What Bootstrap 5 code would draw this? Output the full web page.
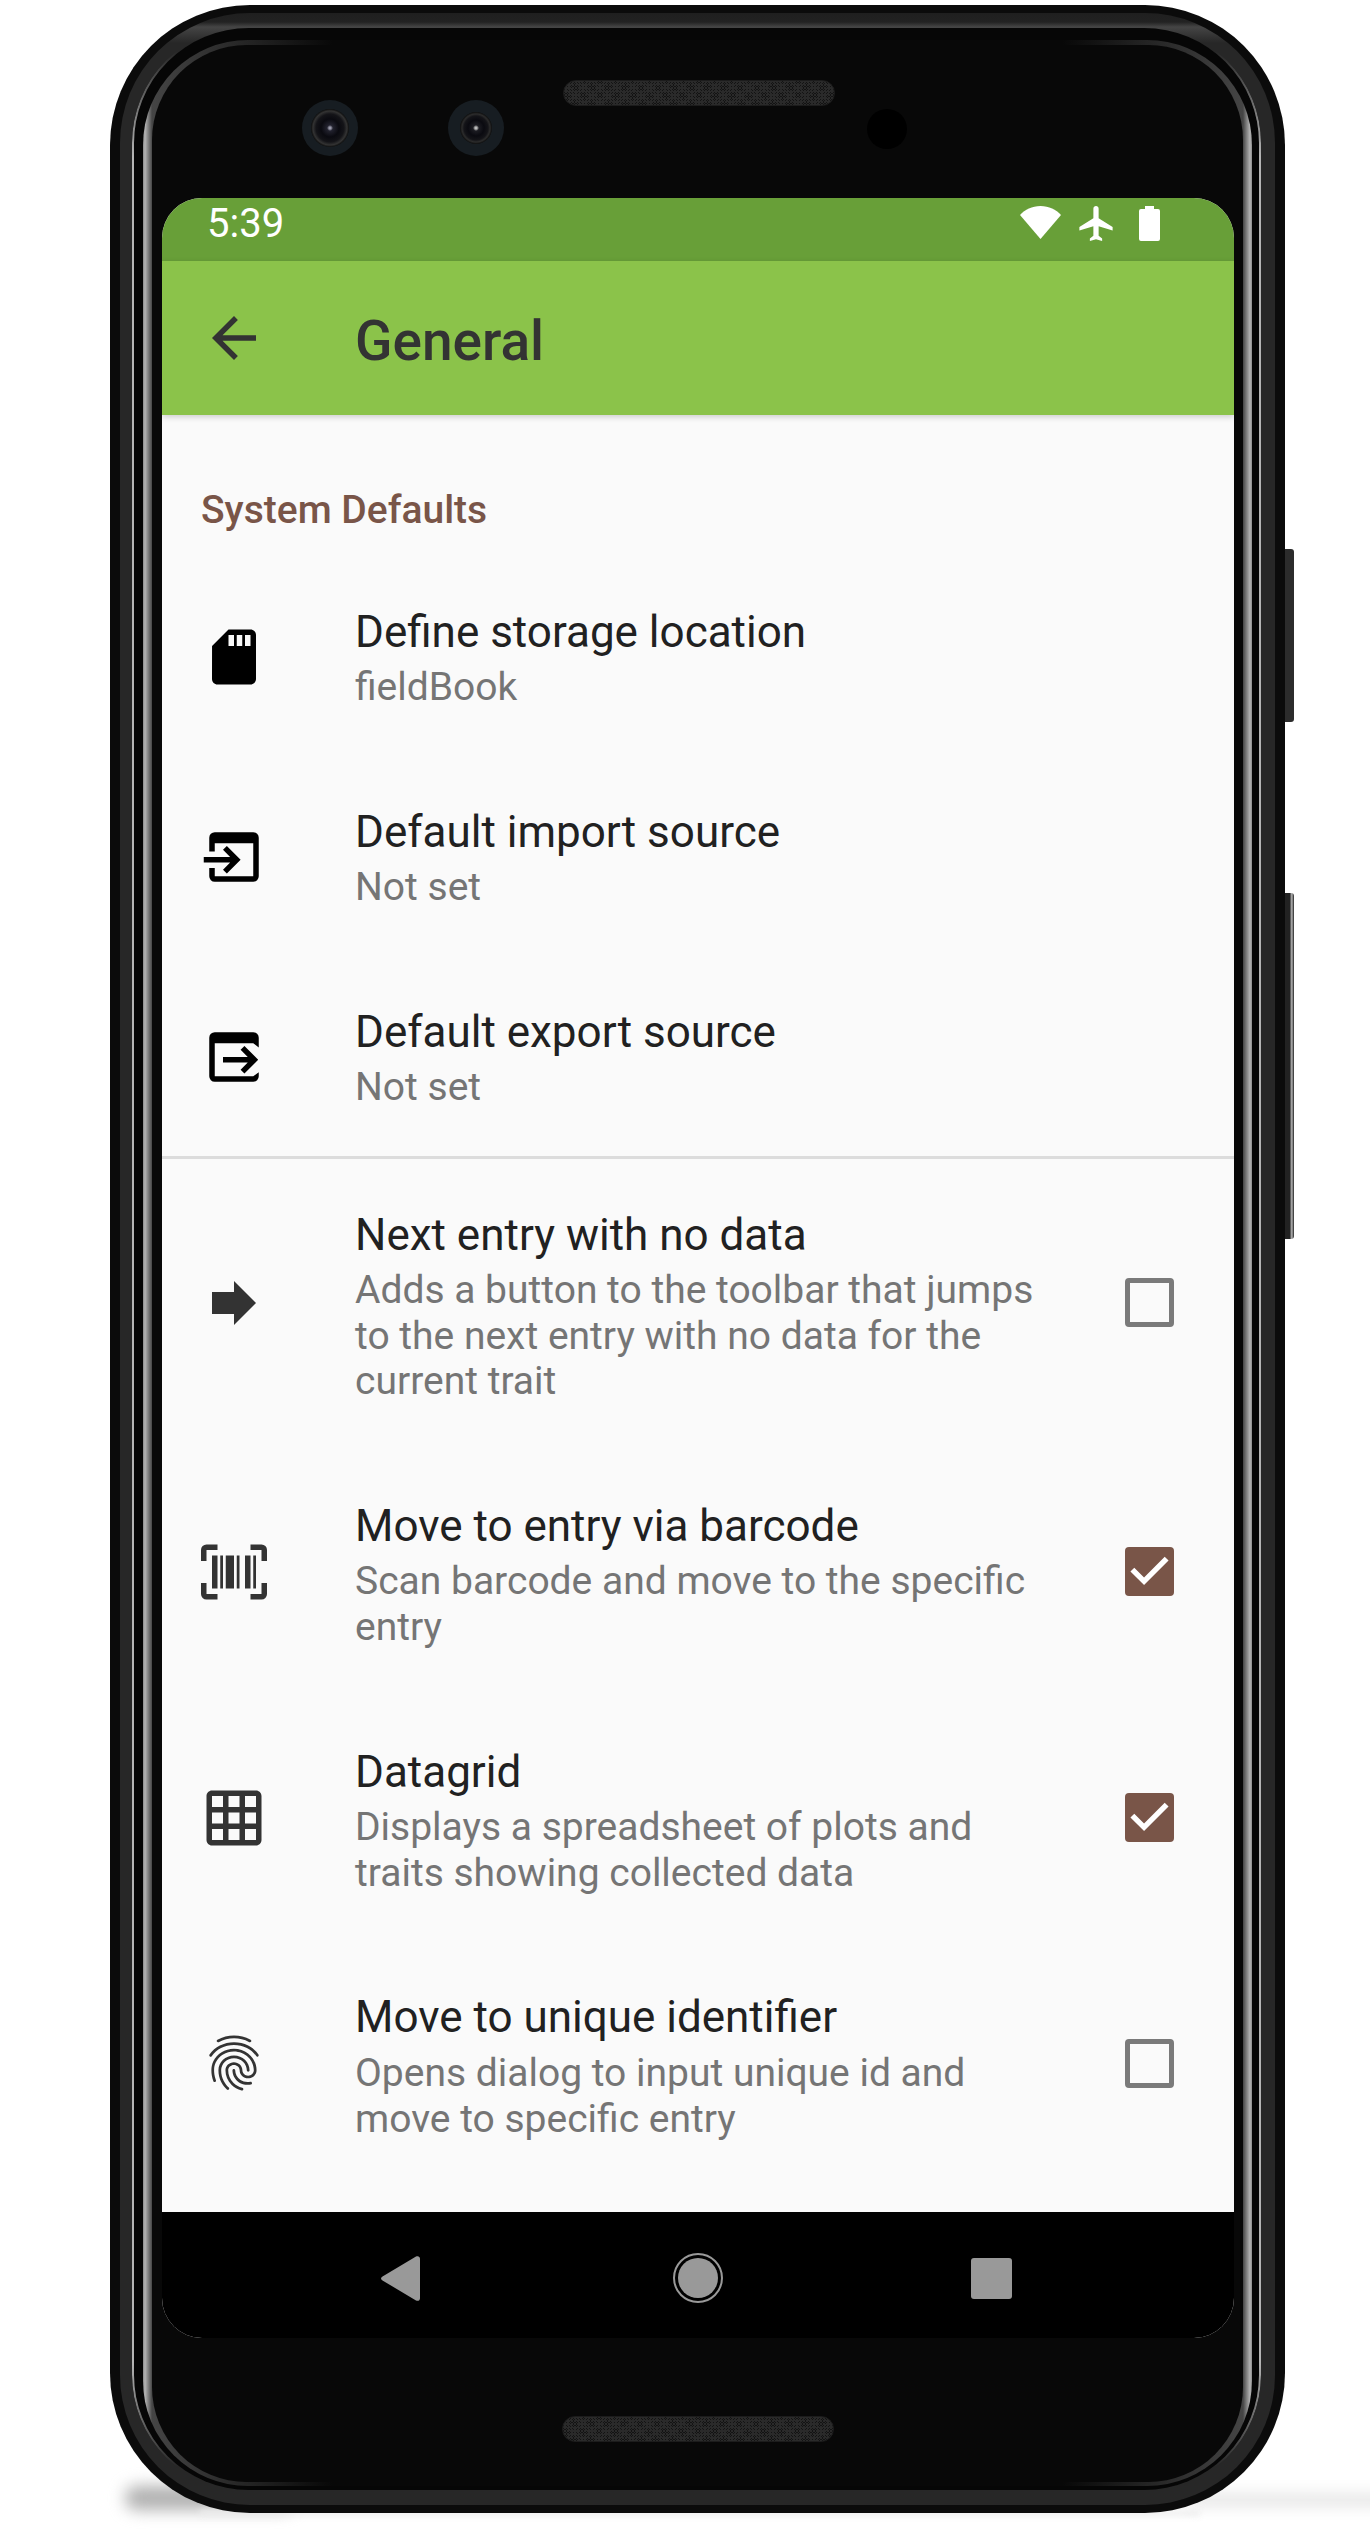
<!DOCTYPE html>
<html lang="en">
<head>
    <meta charset="UTF-8">
    <title>General</title>
    <link href="https://cdn.jsdelivr.net/npm/bootstrap@5.3.3/dist/css/bootstrap.min.css" rel="stylesheet">
    <style>
        html { height: 2534px; overflow: hidden; background: #fff; }
        body { height: 2534px; overflow: hidden; background: transparent; font-family: Roboto, "Liberation Sans", sans-serif; position: relative; }

        /* phone body, one nested layer per band of the frame */
        .phone { position: relative; width: 1175px; height: 2508px; margin: 5px 0 0 110px; }
        .shell-a, .shell-b, .shell-c, .shell-d, .bezel { height: 100%; }
        .shell-a { position: relative; background: #0b0b0b; border-radius: 140px; padding: 8px 10px; }
        .shell-b { background: linear-gradient(180deg, #1f1f1f 0, #222 9px, #454545 14px, #272727 30px); border-radius: 130px; padding: 15px 16px 15px 14px; }
        .shell-c { position: relative; background: #060606; border-radius: 115px; padding: 12px 7px 4px 9px; }
        .shell-c::before { content: ""; position: absolute; inset: -2px; border: 2px solid #b5b5b5; border-radius: 117px;
            -webkit-mask-image: linear-gradient(180deg, transparent 25px, #000 130px, #000 calc(100% - 130px), transparent calc(100% - 25px));
            mask-image: linear-gradient(180deg, transparent 25px, #000 130px, #000 calc(100% - 130px), transparent calc(100% - 25px)); }
        .shell-d { border-radius: 105px; padding: 5px 9px 4px 9px;
            background: linear-gradient(90deg, #8a8a8a 0, #b5b5b5 2px, #454545 9px, #333 60px, #080808 190px, #080808 calc(100% - 190px), #333 calc(100% - 60px), #454545 calc(100% - 9px), #b5b5b5 calc(100% - 2px), #8a8a8a 100%); }
        .bezel { background: #080808; border-radius: 95px; padding: 0 9px 0 10px; }
        .side-key { position: absolute; left: 1174px; width: 10px; border-radius: 0 3px 3px 0; }
        .key-power { top: 544px; height: 173px; background: #2c2c2c; }
        .key-volume { top: 888px; height: 346px; background: linear-gradient(90deg, #222 0, #222 6px, #999 7px, #aaa 8px, #222 10px); }
        .floor-left { position: absolute; left: 125px; top: 2486px; width: 170px; height: 24px; background: #b0b0b0; filter: blur(8px); border-radius: 30px; }
        .floor-mid { position: absolute; left: 200px; top: 2510px; width: 1000px; height: 6px; background: #eee; filter: blur(3px); }
        .floor-right { position: absolute; left: 1190px; top: 2493px; width: 200px; height: 14px; background: #e8e8e8; filter: blur(7px); }

        .top-bezel { height: 153px; padding-left: 140px; }
        .bottom-bezel { height: 144px; padding-top: 78px; }
        .lens-wrap { width: 56px; height: 56px; margin-top: 55px; border-radius: 50%; background: #171d22; }
        .lens-gap { margin-left: 90px; }
        .lens-one { width: 38px; height: 38px; border-radius: 50%; background: radial-gradient(circle, #99a 0 1px, #22222e 3px, #0a0a10 9px, #141418 14px, #333 17px, #0d0d0d 19px); }
        .lens-two { width: 32px; height: 32px; border-radius: 50%; background: radial-gradient(circle, #bbb 0 1px, #1c1c22 3px, #0a0a10 8px, #141418 12px, #2c2c2c 14px, #0d0d0d 16px); }
        .grille { width: 272px; height: 26px; border-radius: 13px; border: 1px solid #1c1c1c; background-color: #131313;
            background-image: repeating-linear-gradient(45deg, #2a2a2a 0 1px, transparent 1px 2px), repeating-linear-gradient(-45deg, #2a2a2a 0 1px, transparent 1px 2px); }
        .grille-top { margin: 35px 0 0 59px; }
        .sensor { width: 40px; height: 40px; margin: 64px 0 0 32px; border-radius: 50%; background: #000; }

        .screen { height: 2140px; background: #fafafa; border-radius: 40px; overflow: hidden; }
        .status-row { height: 63px; background: #689f38; color: #fff; padding: 0 74px 0 45px; font-size: 40px; line-height: 1; }
        .status-time { margin-top: 6px; }
        .status-icons { gap: 18px; padding-top: 8px; }
        .battery-gap { margin-left: 8px; }
        .app-row { position: relative; height: 154px; background: #8bc34a; color: #333; box-shadow: 0 2px 6px rgba(0, 0, 0, .18); padding-left: 39px; }
        .app-title { font-size: 55px; font-weight: 500; margin: 7px 0 0 0; line-height: 1; }
        .pref-section { padding: 72px 0 23px 39px; font-size: 39px; line-height: 46px; font-weight: 500; color: #795548; }
        .pref-row { padding: 47.5px 60px 45.3px 39px; }
        .pref-icon { width: 66px; height: 66px; flex: none; margin-right: 88px; }
        .pref-title { font-size: 44px; line-height: 56px; color: #212121; }
        .pref-sub { font-size: 39px; line-height: 45.7px; margin-top: 5.5px; color: #757575; }
        .pref-check.form-check-input { width: 49px; height: 49px; flex: none; margin: 0 0 0 75px; border: 5px solid #7a7a7a; border-radius: 4px; background-color: transparent; }
        .pref-check.form-check-input:checked { border: 0; background-color: #795548; background-size: 100%;
            background-image: url("data:image/svg+xml,%3csvg xmlns='http://www.w3.org/2000/svg' viewBox='3 3 18 18'%3e%3cpath fill='%23fff' d='M10 17l-5-5 1.41-1.41L10 14.17l7.59-7.59L19 8l-9 9z'/%3e%3c/svg%3e"); }
        /* icon and checkbox sit a little above centre in the lower rows */
        .pref-tall .pref-icon { margin-bottom: 6px; }
        .pref-tall .pref-check.form-check-input { margin-bottom: 6px; }
        .pref-mid .pref-icon { margin-bottom: 5px; }
        .pref-mid .pref-check.form-check-input { margin-bottom: 5px; }
        .pref-rule { height: 3px; margin: 0; background: #dcdcdc; border: 0; opacity: 1; }
        .nav-row { height: 126px; background: #000; padding: 6px 222px 0 219px; }
        .nav-home { width: 50px; height: 50px; margin-left: 5px; border-radius: 50%; border: 2px solid #999; padding: 3px; }
        .nav-home span { display: block; height: 100%; border-radius: 50%; background: #999; }
        .nav-square { width: 41px; height: 41px; border-radius: 3px; background: #999; }
    </style>
</head>
<body>

<div class="floor-left"></div>
<div class="floor-mid"></div>
<div class="floor-right"></div>

<div class="phone">
    <div class="side-key key-power"></div>
    <div class="side-key key-volume"></div>
    <div class="shell-a">
    <div class="shell-b">
    <div class="shell-c">
    <div class="shell-d">
    <div class="bezel d-flex flex-column">

        <div class="top-bezel d-flex align-items-start">
            <div class="lens-wrap d-flex align-items-center justify-content-center"><div class="lens-one"></div></div>
            <div class="lens-wrap lens-gap d-flex align-items-center justify-content-center"><div class="lens-two"></div></div>
            <div class="grille grille-top"></div>
            <div class="sensor"></div>
        </div>

        <div class="screen d-flex flex-column">
            <div class="status-row d-flex justify-content-between">
                <span class="status-time">5:39</span>
                <div class="status-icons d-flex">
                    <svg width="41" height="33" viewBox="0 0 41 33"><path fill="#fff" d="M20.5 33 0 9C5 3.5 12 0 20.5 0S36 3.5 41 9z"/></svg>
                    <svg width="34" height="35" viewBox="2 2 19 20"><path fill="#fff" d="M21 16v-2l-8-5V3.5c0-.83-.67-1.5-1.5-1.5S10 2.67 10 3.5V9l-8 5v2l8-2.5V19l-2 1.5V22l3.5-1 3.5 1v-1.5L13 19v-5.5l8 2.5z"/></svg>
                    <svg class="battery-gap" width="21" height="35" viewBox="0 0 21 35"><path fill="#fff" d="M6 0h9v3h4a2 2 0 0 1 2 2v28a2 2 0 0 1-2 2H2a2 2 0 0 1-2-2V5a2 2 0 0 1 2-2h4z"/></svg>
                </div>
            </div>

            <div class="app-row d-flex align-items-center">
                <svg class="pref-icon" viewBox="0 0 24 24"><path fill="#333" d="M20 11H7.830l5.590-5.590L12 4l-8 8 8 8 1.410-1.410L7.830 13H20v-2z"/></svg>
                <h1 class="app-title">General</h1>
            </div>

            <div class="flex-grow-1">
                <div class="pref-section">System Defaults</div>

                <div class="pref-row d-flex align-items-center">
                    <svg class="pref-icon" viewBox="0 0 24 24"><path fill="#000" d="M18 2h-8L4.020 8 4 20c0 1.100.9 2 2 2h12c1.100 0 2-.9 2-2V4c0-1.100-.9-2-2-2zm-6 6h-2V4h2v4zm3 0h-2V4h2v4zm3 0h-2V4h2v4z"/></svg>
                    <div class="flex-grow-1">
                        <div class="pref-title">Define storage location</div>
                        <div class="pref-sub">fieldBook</div>
                    </div>
                </div>

                <div class="pref-row d-flex align-items-center">
                    <svg class="pref-icon" viewBox="0 0 24 24"><path fill="#000" d="M5 3h14a2 2 0 0 1 2 2v14a2 2 0 0 1-2 2H5a2 2 0 0 1-2-2v-3h2v3h14V7H5v3H3V5a2 2 0 0 1 2-2z"/><path fill="#000" d="M1 12h9.600L8 9.400 9.400 8l5 5-5 5L8 16.600l2.600-2.600H1z"/></svg>
                    <div class="flex-grow-1">
                        <div class="pref-title">Default import source</div>
                        <div class="pref-sub">Not set</div>
                    </div>
                </div>

                <div class="pref-row d-flex align-items-center">
                    <svg class="pref-icon" viewBox="0 0 24 24"><path fill="#000" d="M5 3h14a2 2 0 0 1 2 2v3.500L19 7H5v12h14l2-1.500V19a2 2 0 0 1-2 2H5a2 2 0 0 1-2-2V5a2 2 0 0 1 2-2z"/><path fill="#000" d="M8 12h9l-2.600-2.600L15.800 8l5 5-5 5-1.400-1.400 2.600-2.600H8z"/></svg>
                    <div class="flex-grow-1">
                        <div class="pref-title">Default export source</div>
                        <div class="pref-sub">Not set</div>
                    </div>
                </div>

                <hr class="pref-rule">

                <div class="pref-row pref-tall d-flex align-items-center">
                    <svg class="pref-icon" viewBox="0 0 24 24"><path fill="#333" d="M12 8V4l8 8-8 8v-4H4V8z"/></svg>
                    <div class="flex-grow-1">
                        <div class="pref-title">Next entry with no data</div>
                        <div class="pref-sub">Adds a button to the toolbar that jumps to the next entry with no data for the current trait</div>
                    </div>
                    <input class="form-check-input pref-check" type="checkbox">
                </div>

                <div class="pref-row pref-mid d-flex align-items-center">
                    <svg class="pref-icon" viewBox="0 0 24 24"><path fill="#333" d="M6 2H2a2 2 0 0 0-2 2v4h2V4h4zM18 2h4a2 2 0 0 1 2 2v4h-2V4h-4zM0 16v4a2 2 0 0 0 2 2h4v-2H2v-4zM24 16v4a2 2 0 0 1-2 2h-4v-2h4v-4zM4 6h2v12H4zM7 6h1v12H7zM9 6h3v12H9zM13 6h1v12h-1zM16 6h2v12h-2zM19 6h1v12h-1z"/></svg>
                    <div class="flex-grow-1">
                        <div class="pref-title">Move to entry via barcode</div>
                        <div class="pref-sub">Scan barcode and move to the specific entry</div>
                    </div>
                    <input class="form-check-input pref-check" type="checkbox" checked>
                </div>

                <div class="pref-row pref-mid d-flex align-items-center">
                    <svg class="pref-icon" viewBox="0 0 24 24"><path fill="#333" d="M20 2H4c-1.100 0-2 .9-2 2v16c0 1.100.9 2 2 2h16c1.100 0 2-.9 2-2V4c0-1.100-.9-2-2-2zM8 20H4v-4h4v4zm0-6H4v-4h4v4zm0-6H4V4h4v4zm6 12h-4v-4h4v4zm0-6h-4v-4h4v4zm0-6h-4V4h4v4zm6 12h-4v-4h4v4zm0-6h-4v-4h4v4zm0-6h-4V4h4v4z"/></svg>
                    <div class="flex-grow-1">
                        <div class="pref-title">Datagrid</div>
                        <div class="pref-sub">Displays a spreadsheet of plots and traits showing collected data</div>
                    </div>
                    <input class="form-check-input pref-check" type="checkbox" checked>
                </div>

                <div class="pref-row pref-mid d-flex align-items-center">
                    <svg class="pref-icon" viewBox="0 0 24 24"><path fill="#333" d="M17.81 4.47c-.08 0-.16-.02-.23-.06C15.66 3.42 14 3 12.01 3c-1.98 0-3.86.47-5.57 1.41-.24.13-.54.04-.68-.2-.13-.24-.04-.55.2-.68C7.82 2.52 9.86 2 12.01 2c2.13 0 3.99.47 6.03 1.52.25.13.34.43.21.67-.09.18-.26.28-.44.28zM3.5 9.72c-.1 0-.2-.03-.29-.09-.23-.16-.28-.47-.12-.7.99-1.4 2.25-2.5 3.75-3.27C9.98 4.04 14 4.03 17.15 5.65c1.5.77 2.76 1.86 3.75 3.25.16.22.11.54-.12.7-.23.16-.54.11-.7-.12-.9-1.26-2.04-2.25-3.39-2.94-2.87-1.47-6.54-1.47-9.4.01-1.36.7-2.5 1.7-3.4 2.96-.08.14-.23.21-.39.21zm6.25 12.07c-.13 0-.26-.05-.35-.15-.87-.87-1.34-1.43-2.01-2.64-.69-1.23-1.05-2.73-1.05-4.34 0-2.97 2.54-5.39 5.66-5.39s5.66 2.42 5.66 5.39c0 .28-.22.5-.5.5s-.5-.22-.5-.5c0-2.42-2.09-4.39-4.66-4.39-2.57 0-4.66 1.97-4.66 4.39 0 1.44.32 2.77.93 3.85.64 1.15 1.08 1.64 1.85 2.42.19.2.19.51 0 .71-.11.1-.24.15-.37.15zm7.17-1.85c-1.19 0-2.24-.3-3.1-.89-1.49-1.01-2.38-2.65-2.38-4.39 0-.28.22-.5.5-.5s.5.22.5.5c0 1.41.72 2.74 1.94 3.56.71.48 1.54.71 2.54.71.24 0 .64-.03 1.04-.1.27-.05.53.13.58.41.05.27-.13.53-.41.58-.57.11-1.07.12-1.21.12zM14.91 22c-.04 0-.09-.01-.13-.02-1.59-.44-2.63-1.03-3.72-2.1-1.4-1.39-2.17-3.24-2.17-5.22 0-1.62 1.38-2.94 3.08-2.94 1.7 0 3.08 1.32 3.08 2.94 0 1.07.93 1.94 2.08 1.94s2.08-.87 2.08-1.94c0-3.77-3.25-6.83-7.25-6.83-2.84 0-5.44 1.58-6.61 4.03-.39.81-.59 1.76-.59 2.8 0 .78.07 2.01.67 3.61.1.26-.03.55-.29.64-.26.1-.55-.04-.64-.29-.49-1.31-.73-2.61-.73-3.96 0-1.2.23-2.29.68-3.24 1.33-2.79 4.28-4.6 7.51-4.6 4.55 0 8.25 3.51 8.25 7.83 0 1.62-1.38 2.94-3.08 2.94s-3.08-1.32-3.08-2.94c0-1.07-.93-1.94-2.08-1.94s-2.08.87-2.08 1.94c0 1.71.66 3.31 1.87 4.51.95.94 1.86 1.46 3.27 1.85.27.07.42.35.35.61-.05.23-.26.38-.47.38z"/></svg>
                    <div class="flex-grow-1">
                        <div class="pref-title">Move to unique identifier</div>
                        <div class="pref-sub">Opens dialog to input unique id and move to specific entry</div>
                    </div>
                    <input class="form-check-input pref-check" type="checkbox">
                </div>
            </div>

            <div class="nav-row d-flex align-items-center justify-content-between flex-shrink-0">
                <svg width="39" height="45" viewBox="0 0 39 45"><path fill="#999" d="M35 .6c2-1.200 4 0 4 2.200v39.400c0 2.200-2 3.400-4 2.200L1.500 24.500c-2-1.300-2-2.700 0-4z"/></svg>
                <div class="nav-home"><span></span></div>
                <div class="nav-square"></div>
            </div>
        </div>

        <div class="bottom-bezel d-flex justify-content-center">
            <div class="grille"></div>
        </div>

    </div>
    </div>
    </div>
    </div>
    </div>
</div>

<script src="https://cdn.jsdelivr.net/npm/bootstrap@5.3.3/dist/js/bootstrap.bundle.min.js"></script>
</body>
</html>
